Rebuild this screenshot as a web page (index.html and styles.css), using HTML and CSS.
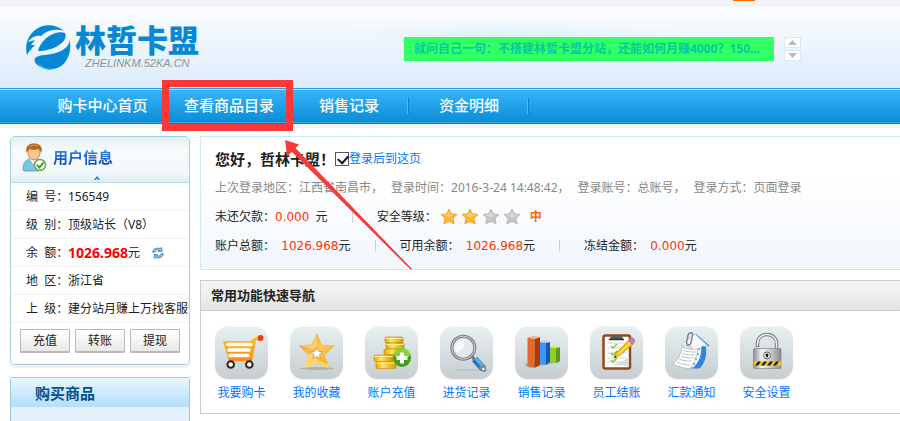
FILE: index.html
```
<!DOCTYPE html>
<html lang="zh-CN">

<head>
  <meta charset="UTF-8">
  <meta name="viewport" content="width=device-width, initial-scale=1.0">
  <title>林哲卡盟</title>
  <link rel="stylesheet" href="styles.css">
</head>

<body>
  <!-- 公共渐变 -->
  <svg class="defs" width="0" height="0" aria-hidden="true">
    <defs>
      <linearGradient id="gold" x1="0" y1="0" x2="0" y2="1">
        <stop offset="0" stop-color="#ffc425"/><stop offset="1" stop-color="#f98a10"/>
      </linearGradient>
      <linearGradient id="starGold" x1="0" y1="0" x2="1" y2="1">
        <stop offset="0" stop-color="#e08a1e"/><stop offset=".5" stop-color="#fbc95a"/><stop offset="1" stop-color="#e9a02c"/>
      </linearGradient>
      <linearGradient id="coin" x1="0" y1="0" x2="1" y2="0">
        <stop offset="0" stop-color="#e9a300"/><stop offset=".35" stop-color="#ffe75e"/><stop offset="1" stop-color="#dd9400"/>
      </linearGradient>
      <linearGradient id="steel" x1="0" y1="0" x2="1" y2="0">
        <stop offset="0" stop-color="#8f8f8f"/><stop offset=".3" stop-color="#f4f4f4"/><stop offset=".7" stop-color="#c0c0c0"/><stop offset="1" stop-color="#8a8a8a"/>
      </linearGradient>
      <symbol id="star" viewBox="0 0 18 17">
        <path d="M9 1.2l2.4 4.700 5.600.6-4 3.800 1.100 5.500L9 13.300l-5.100 2.500L5 10.300 1 6.500l5.600-.6z" stroke-width="1" stroke-linejoin="round"/>
        <path d="M9 3.500l1.600 3.200 3.400.4L9 9.500 4 7.100l3.400-.4z" fill="#fff" fill-opacity=".35" stroke="none"/>
      </symbol>
    </defs>
  </svg>

  <div class="topbar"><span class="topbar-mark"></span></div>

  <header class="header">
    <a class="logo" href="#">
      <svg width="46" height="46" viewBox="0 0 46 46">
        <path d="M2 30C-1 19 4 7 15 2c8-3.500 17-2 24 4-9-3-18 0-23 5C10 10 6 13 3 17l7-2-4 5 4 0c-3 3-6 6-8 10z" fill="#0788d2"/>
        <path d="M13 26c2-8 8-14 15-17 4-2 9-2.500 12-1 2 4-1 9-6 12-6 4-14 6-21 6z" fill="#0788d2"/>
        <path d="M44.500 15c.5 7-9 14-25 15-5 .3-10 2-10 5 0 3 3 5 6 7 9 5 21 2 26-7 3-5 5-12 3-20z" fill="#0788d2"/>
        <path d="M13 37c3 5 9 8 17 6-5 3-15 2-17-6z" fill="#45b4ec"/>
      </svg>
      <span class="logo-words">
        <span class="logo-name">林哲卡盟</span>
        <span class="logo-domain">ZHELINKM.52KA.CN</span>
      </span>
    </a>

    <div class="notice">
      <a class="notice-text" href="#">就问自己一句：不搭建林哲卡盟分站，还能如何月赚4000？150...</a>
      <div class="notice-btns">
        <button type="button" aria-label="上一条"><svg width="9" height="5" viewBox="0 0 9 5"><path d="M4.500 0L9 5H0z"/></svg></button>
        <button type="button" aria-label="下一条"><svg width="9" height="5" viewBox="0 0 9 5"><path d="M0 0h9L4.500 5z"/></svg></button>
      </div>
    </div>
  </header>

  <nav class="nav">
    <a class="nav-home" href="#">购卡中心首页</a>
    <a href="#">查看商品目录</a>
    <a href="#">销售记录</a>
    <a href="#">资金明细</a>
  </nav>

  <div class="page">
    <aside class="side">
      <section class="user">
        <div class="user-head">
          <svg width="25" height="29" viewBox="0 0 25 29">
            <path d="M1 27c0-7 3-11 8-11h5c4 0 6 3 7 7l-5 5H2z" fill="#7cc4e0" stroke="#5fa9c8"/>
            <path d="M8 16l3 5 4-5z" fill="#fff"/>
            <ellipse cx="12" cy="9.500" rx="6" ry="7.500" fill="#f9c891" stroke="#c98744"/>
            <path d="M4.500 10C3 3 7 .5 12 .5S21 3 19.500 10c-1-2-2-3-3-4-3 1-7 1-9 0-2 1-2 3-3 4z" fill="#b5651d"/>
            <path d="M7 4c2-2 6-2.500 9-1" stroke="#dc9a50" fill="none"/>
            <circle cx="18" cy="22" r="5.500" fill="#fff" stroke="#6aa84f" stroke-width="1.500"/>
            <path d="M15 22l2.500 2.500 4-5" fill="none" stroke="#3f9a2c" stroke-width="2"/>
          </svg>
          <h2>用户信息</h2>
          <svg class="user-fold" width="6" height="4" viewBox="0 0 6 4"><path d="M3 0l3 4H4L3 2.500 2 4H0z" fill="#2a7fc9"/></svg>
        </div>
        <dl class="user-list">
          <div><dt>编&nbsp; 号：</dt><dd>156549</dd></div>
          <div><dt>级&nbsp; 别：</dt><dd>顶级站长（V8）</dd></div>
          <div>
            <dt>余&nbsp; 额：</dt>
            <dd><strong>1026.968</strong>元
              <button class="refresh" type="button" aria-label="刷新余额">
                <svg width="12" height="12" viewBox="0 0 12 12" fill="#8fbdea" stroke="#3e7fc6" stroke-width=".8" stroke-linejoin="round"><path d="M.6 5.200C1 2 4 .4 7.500 1.400L9.500.6l.6 4-4-.2L7.500 3.300C5 2.600 3.500 3.200 3 5.200z"/><path d="M11.400 6.800c-.4 3.200-3.400 4.800-6.900 3.800l-2 .8-.6-4 4 .2-1.400 1.100c2.500.7 4 .1 4.500-1.900z"/></svg>
              </button>
            </dd>
          </div>
          <div><dt>地&nbsp; 区：</dt><dd>浙江省</dd></div>
          <div><dt>上&nbsp; 级：</dt><dd>建分站月赚上万找客服</dd></div>
        </dl>
        <div class="user-btns">
          <button type="button">充值</button>
          <button type="button">转账</button>
          <button type="button">提现</button>
        </div>
      </section>

      <section class="buy">
        <h2>购买商品</h2>
      </section>
    </aside>

    <main class="main">
      <section class="welcome">
        <div class="line">
          <h1>您好，哲林卡盟！</h1>
          <label class="remember"><input type="checkbox" checked>登录后到这页</label>
        </div>
        <div class="line login-info">
          <span>上次登录地区：江西省南昌市，</span>
          <span>登录时间：2016-3-24 14:48:42，</span>
          <span>登录账号：总账号，</span>
          <span>登录方式：页面登录</span>
        </div>
        <div class="line">
          <span>未还欠款：<b>0.000</b>&nbsp; 元</span>
          <i class="split"></i>
          <span class="level">安全等级：
            <span class="stars">
              <svg width="18" height="17"><use href="#star"/></svg>
              <svg width="18" height="17"><use href="#star"/></svg>
              <svg class="off" width="18" height="17"><use href="#star"/></svg>
              <svg class="off" width="18" height="17"><use href="#star"/></svg>
            </span>
            <em>中</em>
          </span>
        </div>
        <div class="line">
          <span>账户总额：&nbsp; <b>1026.968</b>元</span>
          <i class="split"></i>
          <span>可用余额：&nbsp; <b>1026.968</b>元</span>
          <i class="split"></i>
          <span>冻结金额：&nbsp; <b>0.000</b>元</span>
        </div>
      </section>

      <section class="quick">
        <h2>常用功能快速导航</h2>
        <div class="quick-list">
          <a href="#">
            <svg viewBox="0 0 53 53">
              <path d="M8 15h28l3-3 6-1v2l-4 2-4 20H14z" fill="url(#gold)"/>
              <path d="M13 18.500h23M14 24h20M15 29.500h18" stroke="#fff" stroke-width="3.500" stroke-linecap="round"/>
              <circle cx="45.500" cy="12" r="3" fill="#f23d0c"/>
              <circle cx="15.700" cy="38.500" r="3.300" fill="#fff" stroke="#2b2320" stroke-width="2"/>
              <circle cx="34.300" cy="38.500" r="3.300" fill="#fff" stroke="#2b2320" stroke-width="2"/>
            </svg>
            我要购卡
          </a>
          <a href="#">
            <svg viewBox="0 0 53 53">
              <ellipse cx="27" cy="42.500" rx="17" ry="1.500" fill="#a9a08c" opacity=".7"/>
              <path d="M26.700 7l5.300 11.500 13.300 1-10 9.500 3.500 13.500-12.100-6-12 6L18 29 8.300 19.500l13-1z" fill="url(#starGold)"/>
              <path d="M26.700 7v13l-3 3-15.400-3.500 13-1zM18 29l5-2 3.700 5v4.500l-12 6z" fill="#ffda83" opacity=".6"/>
              <path d="M15.500 38l-.8 4.500 12-6 12.100 6-1-4.500-11.100-4z" fill="#ffe04d" opacity=".8"/>
              <path d="M26.700 21.500l1.800 3.700 4 .4-3 2.800.9 4-3.700-2-3.700 2 .9-4-3-2.800 4-.4z" fill="#fff" stroke="#cf841a" stroke-width=".7"/>
            </svg>
            我的收藏
          </a>
          <a href="#">
            <svg viewBox="0 0 53 53">
              <g fill="url(#coin)" stroke="#c88400" stroke-width=".6">
                <rect x="20" y="11" width="18" height="6" rx="1.500"/><rect x="21" y="17" width="18" height="6" rx="1.500"/>
                <rect x="19" y="23" width="20" height="6" rx="1.500"/><rect x="21" y="29" width="18" height="6" rx="1.500"/>
                <rect x="9" y="29" width="19" height="6.500" rx="1.500"/><rect x="11" y="35.500" width="20" height="7" rx="1.500"/>
              </g>
              <path d="M20.500 12.500h17M21.500 18.500h17M9.500 30.500h18M11.500 37h19" stroke="#fff39a"/>
              <circle cx="37" cy="32" r="9" fill="#3da318"/>
              <path d="M29 30a8 8 0 0 1 16 0c-5 2-11 2-16 0z" fill="#85d13e"/>
              <path d="M37 26.500v11M31.500 32h11" stroke="#fff" stroke-width="4"/>
            </svg>
            账户充值
          </a>
          <a href="#">
            <svg viewBox="0 0 53 53">
              <path d="M15 44h28" stroke="#9fa5a8" opacity=".6"/>
              <path d="M31 29.500l4 4.500" stroke="#777" stroke-width="3"/>
              <path d="M34.500 33l9 10" stroke="#1f78c4" stroke-width="7"/>
              <path d="M35.500 32l8 9" stroke="#58b5f2" stroke-width="3"/>
              <path d="M42 41.500l2 2" stroke="#888" stroke-width="5" stroke-linecap="round"/>
              <circle cx="43.500" cy="43" r="1.200" fill="#fff"/>
              <circle cx="23.300" cy="21.700" r="11.500" fill="#e4e9eb" stroke="#7b7d80" stroke-width="3"/>
              <circle cx="23.300" cy="21.700" r="11.500" fill="none" stroke="#d5d7d9"/>
              <path d="M15 22c1-6 5-8 10-8 1 6-3 11-9 12z" fill="#fff" opacity=".7"/>
            </svg>
            进货记录
          </a>
          <a href="#">
            <svg viewBox="0 0 53 53">
              <path d="M9 38l5 4 31-6-2-3z" fill="#8b9194" opacity=".6"/>
              <path d="M34 21l7 1v15l-7-1z" fill="#8fcf2b"/><path d="M41 22l4-1v14l-4 2z" fill="#5c9a12"/><path d="M34 21l4-1.500 7 1.500-4 1z" fill="#cdee7e"/>
              <path d="M25 16l6 1v22l-6-1z" fill="#3d97f4"/><path d="M31 17l4-1v20l-4 3z" fill="#1656bd"/><path d="M25 16l4-1.500 6 1.500-4 1z" fill="#9fd0ff"/>
              <path d="M12.500 11.500l7 1.500v29l-7-2z" fill="#e5682a"/><path d="M19.500 13l5.500-2v28l-5.500 3z" fill="#a93a0a"/><path d="M12.500 11.500l6-1.500 6.500 1-5.500 2z" fill="#f8b07c"/>
            </svg>
            销售记录
          </a>
          <a href="#">
            <svg viewBox="0 0 53 53">
              <rect x="13.500" y="9.500" width="26.500" height="33" rx="2" fill="#fff" stroke="#934819" stroke-width="2.500"/>
              <path d="M17 17h20M17 22h20M17 27h20M17 32h20M17 36h14" stroke="#d3d6d8"/>
              <path d="M39 32l-16 7 16 1z" fill="#d9dcde"/>
              <path d="M20 13c0-2 1-3 3-3h7c2 0 3 1 3 3z" fill="#5a5a5e"/><path d="M19 13.500h15" stroke="#333" stroke-width="1.500"/>
              <path d="M21 20l2 2 4-4M21 27l2 2 4-4M21 34l2 2 4-4" stroke="#79c830" stroke-width="1.500" fill="none"/>
              <path d="M24 32l2-5L38.500 14.500l4 4L29 30z" fill="#f6c813" stroke="#b98408" stroke-width=".7"/>
              <path d="M28 28.500L40.500 16.500" stroke="#fff080"/>
              <path d="M38.500 14.500l2-2.500c2-1 5 1.500 4 4l-2 2.500z" fill="#d07eaa" stroke="#995b80" stroke-width=".6"/>
              <path d="M24 32l1-2.500 1.500 1.500z" fill="#222"/>
            </svg>
            员工结账
          </a>
          <a href="#">
            <svg viewBox="0 0 53 53">
              <path d="M31 8l14 12-6 .5c1 8-1 16-5 22h-8c6-7 7-14 6-22z" fill="#3582dc"/>
              <path d="M30 8l13 12h-6c2 8-3 16-7 22l-9-2c6-7 7-13 5-20l-10-1z" fill="#f5f8fb" stroke="#aab7c3" stroke-width=".7"/>
              <path d="M36 21h5c1 8-1 16-6 21h-7c6-6 9-13 8-21z" fill="#3582dc"/>
              <path d="M17 21c5 2 10 3 16 2-1 8-4 14-8 20-5-1-11-2-17-5 5-4 8-10 9-17z" fill="#fff" stroke="#a8adb2" stroke-width=".7"/>
              <path d="M18 24c4 2 8 2 13 2M17 27c4 2 8 2 13 2M16 30c4 2 8 2 13 2M14 33c4 2 8 2 13 2M12 36c4 2 8 3 13 3" stroke="#b9bec4" fill="none"/>
              <path d="M34 22v2M33 27v2M31 32v2M29 37v2" stroke="#4a9de8" stroke-width="1.500"/>
              <path d="M22 15l1-6c1-3 5-3 4.500 0L26 17c-1 3-5 2-4.500-1l1.500-5" fill="none" stroke="#7a7f84" stroke-width="1.400"/>
            </svg>
            汇款通知
          </a>
          <a href="#">
            <svg viewBox="0 0 53 53">
              <path d="M17.500 21v-3c0-6 4-9.500 9.500-9.500s9.500 3.500 9.500 9.500v5" fill="none" stroke="#777" stroke-width="3.500"/>
              <path d="M17.500 20v-2c0-6 4-9.500 9.500-9.500s9.500 3.500 9.500 9.500v5" fill="none" stroke="#eee" stroke-width="1.500"/>
              <rect x="13.500" y="22.500" width="27.500" height="20" rx="1" fill="url(#steel)" stroke="#858585" stroke-width=".7"/>
              <path d="M14 35.500h27v4H14z" fill="#f4c915"/>
              <path d="M15 39.500l3-4h3l-3 4zM21 39.500l3-4h3l-3 4zM27 39.500l3-4h3l-3 4zM33 39.500l3-4h3l-3 4z" fill="#1d1d1d"/>
              <circle cx="27" cy="29.500" r="3.500" fill="#eee" stroke="#666"/>
              <path d="M25.500 29a1.500 1.500 0 1 1 3 0l-1 2.500h-1z" fill="#111"/>
            </svg>
            安全设置
          </a>
        </div>
      </section>
    </main>
  </div>

  <!-- 指引标注 -->
  <div class="guide-box"></div>
  <svg class="guide-arrow" width="128" height="130" viewBox="0 0 128 130"><path d="M0 0l14 4.500-3.500 3.500L127 129l-1 1L7 12l-5 4z" fill="#f93a3a"/></svg>
</body>

</html>
```
FILE: styles.css
```
* {
  margin: 0;
  padding: 0;
  box-sizing: border-box;
}

body {
  position: relative;
  display: flex;
  flex-direction: column;
  min-height: 100vh;
  font: 12px/18px "Noto Sans", "Noto Sans CJK SC", sans-serif;
  color: #222;
  background: #fff;
}

a {
  color: #0077ff;
  text-decoration: none;
}

button {
  font: inherit;
  cursor: pointer;
}

svg {
  display: block;
  flex: none;
}

.defs {
  position: absolute;
}

/* 顶部 */
.topbar {
  display: flex;
  justify-content: flex-end;
  height: 7px;
  padding-right: 145px;
  background: #f3f4f6;
}

.topbar-mark {
  width: 22px;
  height: 1px;
  background: #ff6600;
}

.header {
  display: flex;
  justify-content: space-between;
  align-items: flex-start;
  height: 81px;
  padding: 18px 99px 0 25px;
  background:
    radial-gradient(ellipse 180px 16px at 510px 28px, rgba(190, 228, 246, 0.3), transparent),
    linear-gradient(#fcfdff, #dbebfa);
}

.logo {
  display: flex;
  gap: 4px;
}

.logo-words {
  display: flex;
  flex-direction: column;
  gap: 2px;
}

.logo-name {
  font-size: 31px;
  line-height: 30px;
  font-weight: 900;
  color: #0788d2;
}

.logo-domain {
  padding-left: 10px;
  font: italic 11px/12px "Liberation Sans", sans-serif;
  color: #8e9398;
}

.notice {
  display: flex;
  gap: 10px;
  padding-top: 12px;
}

.notice-text {
  width: 370px;
  height: 24px;
  padding: 0 10px;
  line-height: 24px;
  font-weight: bold;
  color: #00cc99;
  background: #33ff66;
  white-space: nowrap;
  overflow: hidden;
}

.notice-btns {
  display: flex;
  flex-direction: column;
  gap: 2px;
}

.notice-btns button {
  display: flex;
  align-items: center;
  justify-content: center;
  width: 17px;
  height: 11px;
  background: #fff;
  border: 1px solid #dce8f0;
  fill: #b5bcc5;
}

/* 导航 */
.nav {
  display: flex;
  height: 40px;
  padding-left: 36px;
  border-top: 1px solid #2b9fe0;
  border-bottom: 4px solid #f3f4f6;
  background: linear-gradient(#39b5fb, #078cd3);
  box-shadow: inset 0 1px #a6e0ff, inset 0 -1px #0580c2, inset 0 -2px #3ba6e0;
}

.nav a {
  width: 120px;
  line-height: 33px;
  font-size: 15px;
  font-weight: 500;
  text-align: center;
  color: #fff;
  background: linear-gradient(90deg, #4dbcf5 50%, #0d86c9 50%) right 9px / 2px 16px no-repeat;
}

.nav .nav-home {
  width: 133px;
}

/* 主体 */
.page {
  display: flex;
  flex: 1;
  gap: 10px;
  padding: 8px 0 0 10px;
}

.side {
  display: flex;
  flex-direction: column;
  gap: 12px;
  width: 180px;
  flex: none;
}

.user {
  border: 1px solid #a6cde0;
  border-radius: 5px;
  box-shadow: 0 3px #f0f0f0;
}

.user-head {
  position: relative;
  display: flex;
  align-items: center;
  gap: 6px;
  height: 46px;
  padding: 0 11px 5px;
  border-radius: 4px 4px 0 0;
  background: linear-gradient(#e2f0f0, #f5fbfb 30%, #f2f8f9 80%, #ddeef5);
  border-bottom: 1px solid #b9dced;
}

.user-head h2 {
  font-size: 15px;
  line-height: 20px;
  background: linear-gradient(#2f9be8, #0b37b8);
  -webkit-background-clip: text;
  background-clip: text;
  color: transparent;
}

.user-fold {
  position: absolute;
  left: 83px;
  bottom: 2px;
}

.user-list div {
  display: flex;
  height: 28px;
  padding-left: 15px;
  line-height: 27px;
  border-bottom: 1px solid #f1f1f1;
}

.user-list dt {
  width: 42px;
  flex: none;
  white-space: nowrap;
}

.user-list dd {
  display: flex;
  align-items: center;
  min-width: 0;
  white-space: nowrap;
  overflow: hidden;
}

.user-list strong {
  font-size: 14px;
  color: #ff0000;
}

.refresh {
  margin-left: 12px;
  background: none;
  border: none;
}

.user-btns {
  display: flex;
  gap: 5px;
  padding: 6px 9px 10px;
  border-bottom: 1px solid #f3f3f3;
}

.user-btns button {
  width: 50px;
  height: 24px;
  line-height: 20px;
  color: #222;
  background: linear-gradient(#fff, #e8e8e8);
  border: 1px solid #b9b9b9;
  border-bottom-width: 2px;
  border-radius: 1px;
}

.buy {
  flex: 1;
  border: 1px solid #9fc6df;
  border-bottom: none;
  border-radius: 3px 3px 0 0;
  background: #e6f0fc;
}

.buy h2 {
  height: 29px;
  padding-left: 24px;
  font-size: 15px;
  line-height: 30px;
  color: #04508f;
  background: linear-gradient(#e8f6ff, #b3defb);
}

.main {
  flex: 1;
  min-width: 0;
}

.welcome {
  margin-bottom: 10px;
  padding: 7px 14px 9px;
  border: 1px solid #cfe8f3;
  border-right: none;
  background: linear-gradient(#fff 30%, #f1f6fd);
  box-shadow: inset 0 -1px #fff;
}

.line {
  display: flex;
  align-items: center;
  height: 29px;
  white-space: nowrap;
}

.line h1 {
  width: 120px;
  font-size: 15px;
}

.line b {
  font: 12px "DejaVu Sans", sans-serif;
  color: #ff3300;
}

.remember {
  display: flex;
  align-items: center;
  color: #0077ff;
}

.remember input {
  appearance: none;
  width: 14px;
  height: 14px;
  border: 1px solid #555;
  background: #fff;
}

.remember input:checked::before {
  content: '';
  display: block;
  width: 8px;
  height: 5px;
  margin: 2px;
  border: solid #111;
  border-width: 0 0 2px 2px;
  transform: rotate(-48deg);
}

.login-info {
  gap: 8px;
  color: #888;
}

.split {
  width: 1px;
  height: 12px;
  margin: 0 24px;
  background: #d3ccd4;
}

.level,
.stars {
  display: flex;
  align-items: center;
  gap: 3px;
}

.stars svg {
  fill: #fdb62d;
  stroke: #f0a530;
}

.stars .off {
  fill: #c6c6c6;
  stroke: #b8b8b8;
}

.level em {
  margin-left: 6px;
  font-style: normal;
  font-weight: bold;
  color: #ff6600;
}

/* 快速导航 */
.quick {
  border: 1px solid #ccc;
  border-right: none;
}

.quick h2 {
  height: 30px;
  padding-left: 10px;
  font-size: 13px;
  line-height: 28px;
  background: linear-gradient(#f6f6f6, #e4e4e4);
  border-bottom: 1px solid #ccc;
}

.quick-list {
  display: flex;
  flex-wrap: wrap;
  gap: 22px;
  padding: 15px 14px 11px;
}

.quick-list a {
  width: 53px;
  text-align: center;
}

.quick-list svg {
  width: 53px;
  height: 53px;
  margin-bottom: 5px;
  border-radius: 13px;
  background: linear-gradient(#e9f0f2, #c5cdd1);
  box-shadow: inset 0 1px #f4f8f9, 0 1px 1px #eee;
}

/* 指引标注 */
.guide-box {
  position: absolute;
  left: 162px;
  top: 80px;
  width: 131px;
  height: 51px;
  border: 7px solid #fb3838;
}

.guide-arrow {
  position: absolute;
  left: 285px;
  top: 140px;
}
```
